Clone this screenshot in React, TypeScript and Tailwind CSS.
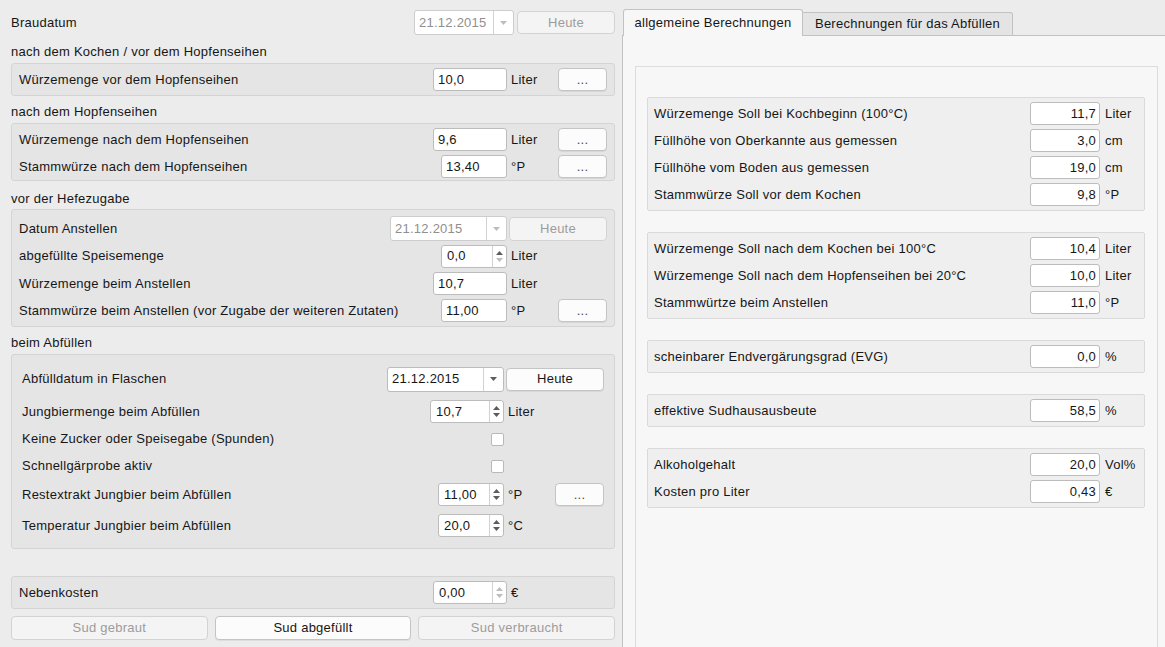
import React from 'react';

type Kids = { children?: React.ReactNode };

const Tri = ({ up, dim }: { up?: boolean; dim?: boolean }) => (
  <svg width="7" height="4" viewBox="0 0 7 4" className={dim ? 'text-[#bdbdbd]' : 'text-[#5c5c5c]'}>
    <polygon points={up ? '3.5,0 7,4 0,4' : '0,0 7,0 3.5,4'} fill="currentColor" />
  </svg>
);

const LineEdit = ({ value, w, right }: { value: string; w: string; right?: boolean }) => (
  <div
    className={`${w} h-[23px] shrink-0 bg-white border border-[#bcbcbc] rounded-[3px] flex items-center ${
      right ? 'justify-end pr-[3px]' : 'pl-[4px]'
    }`}
  >
    {value}
  </div>
);

const SpinBox = ({ value, w, downDim, upDim }: { value: string; w: string; downDim?: boolean; upDim?: boolean }) => (
  <div className={`${w} h-[23px] shrink-0 bg-white border border-[#bcbcbc] rounded-[3px] flex`}>
    <div className="flex-1 flex items-center pl-[5px]">{value}</div>
    <div className="w-[14px] border-l border-[#d2d2d2] flex flex-col items-center justify-center gap-[3px]">
      <Tri up dim={upDim} />
      <Tri dim={downDim} />
    </div>
  </div>
);

const Combo = ({ value, w, disabled }: { value: string; w: string; disabled?: boolean }) => (
  <div
    className={`${w} h-[25px] shrink-0 bg-white border rounded-[3px] flex ${
      disabled ? 'border-[#cdcdcd] text-[#8f8f8f]' : 'border-[#bcbcbc]'
    }`}
  >
    <div className="flex-1 flex items-center pl-[4px]">{value}</div>
    <div className="w-[20px] border-l border-[#d2d2d2] flex items-center justify-center">
      <Tri dim={disabled} />
    </div>
  </div>
);

const Btn = ({ label, w, disabled, extra = '' }: { label: string; w: string; disabled?: boolean; extra?: string }) => (
  <div
    className={`${w} ${extra} h-[23px] shrink-0 rounded-[4px] border flex items-center justify-center ${
      disabled
        ? 'bg-[#f4f4f4] border-[#d3d3d3] text-[#9c9c9c]'
        : 'bg-[#fcfcfc] border-[#c4c4c4] shadow-[0_1px_0_rgba(0,0,0,0.06)]'
    }`}
  >
    {label}
  </div>
);

const Check = () => <div className="w-[13px] h-[13px] bg-white border border-[#b9b9b9] rounded-[2px] shrink-0" />;

const Box = ({ children, extra = '' }: Kids & { extra?: string }) => (
  <div className={`border border-[#d4d4d4] bg-[#e5e5e5] rounded-[3px] ${extra}`}>{children}</div>
);

const Section = ({ children, extra }: Kids & { extra: string }) => (
  <div className={`h-[18px] flex items-center ${extra}`}>{children}</div>
);

const Row = ({ label, h = 'h-[27px]', extra = '', children }: Kids & { label: string; h?: string; extra?: string }) => (
  <div className={`${h} ${extra} flex items-center`}>
    <span className="flex-1 whitespace-nowrap">{label}</span>
    {children}
  </div>
);

const Unit = ({ u, w = 'w-[47px]' }: { u?: string; w?: string }) => (
  <span className={`${w} pl-[4px] shrink-0 whitespace-nowrap`}>{u}</span>
);

const Dots = ({ extra = 'ml-[4px]' }: { extra?: string }) => (
  <Btn label="..." w="w-[49px]" extra={`${extra} text-[#4a4a4a]`} />
);

const RBox = ({ children, extra = '' }: Kids & { extra?: string }) => (
  <div className={`border border-[#dadada] bg-[#efefef] rounded-[2px] pt-[2px] pb-[2px] ${extra}`}>{children}</div>
);

const RRow = ({ label, value, unit }: { label: string; value: string; unit: string }) => (
  <div className="h-[27px] flex items-center pl-[6px]">
    <span className="flex-1 whitespace-nowrap">{label}</span>
    <LineEdit value={value} w="w-[70px]" right />
    <span className="w-[44px] pl-[5px] shrink-0 whitespace-nowrap">{unit}</span>
  </div>
);

export default function App() {
  return (
    <div className="w-[1165px] h-[647px] overflow-hidden bg-[#ececec] flex font-['Liberation_Sans',Arial,sans-serif] text-[13px] tracking-[0.25px] text-[#161616]">
      {/* linke Seite */}
      <div className="w-[622px] shrink-0 pl-[11px] pr-[7px] flex flex-col">
        <div className="mt-[10px] h-[25px] flex items-center">
          <span className="flex-1">Braudatum</span>
          <Combo value="21.12.2015" w="w-[100px]" disabled />
          <Btn label="Heute" w="w-[98px]" extra="ml-[3px]" disabled />
        </div>

        <Section extra="mt-[8px] mb-[2px]">nach dem Kochen / vor dem Hopfenseihen</Section>
        <Box extra="pl-[7px] pr-[7px] py-[2px]">
          <Row label="Würzemenge vor dem Hopfenseihen">
            <LineEdit value="10,0" w="w-[74px]" />
            <Unit u="Liter" />
            <Dots />
          </Row>
        </Box>

        <Section extra="mt-[7px] mb-[2px]">nach dem Hopfenseihen</Section>
        <Box extra="pl-[7px] pr-[7px] pt-[2px]">
          <Row label="Würzemenge nach dem Hopfenseihen">
            <LineEdit value="9,6" w="w-[74px]" />
            <Unit u="Liter" />
            <Dots />
          </Row>
          <Row label="Stammwürze nach dem Hopfenseihen">
            <LineEdit value="13,40" w="w-[66px]" />
            <Unit u="°P" />
            <Dots />
          </Row>
        </Box>

        <Section extra="mt-[9px] mb-[1px]">vor der Hefezugabe</Section>
        <Box extra="pl-[7px] pr-[7px] pt-[5px] pb-[2px]">
          <Row label="Datum Anstellen">
            <Combo value="21.12.2015" w="w-[117px]" disabled />
            <Btn label="Heute" w="w-[98px]" extra="ml-[2px] h-[24px]" disabled />
          </Row>
          <Row label="abgefüllte Speisemenge" h="h-[28px]">
            <SpinBox value="0,0" w="w-[66px]" downDim />
            <Unit u="Liter" />
            <div className="w-[53px] shrink-0" />
          </Row>
          <Row label="Würzemenge beim Anstellen">
            <LineEdit value="10,7" w="w-[74px]" />
            <Unit u="Liter" />
            <div className="w-[53px] shrink-0" />
          </Row>
          <Row label="Stammwürze beim Anstellen (vor Zugabe der weiteren Zutaten)">
            <LineEdit value="11,00" w="w-[66px]" />
            <Unit u="°P" />
            <Dots />
          </Row>
        </Box>

        <Section extra="mt-[7px] mb-[2px]">beim Abfüllen</Section>
        <Box extra="pl-[10px] pr-[10px] pt-[11px] pb-[11px]">
          <Row label="Abfülldatum in Flaschen" h="h-[26px]">
            <Combo value="21.12.2015" w="w-[117px]" />
            <Btn label="Heute" w="w-[98px]" extra="ml-[2px]" />
          </Row>
          <Row label="Jungbiermenge beim Abfüllen" h="h-[23px]" extra="mt-[8px]">
            <SpinBox value="10,7" w="w-[74px]" />
            <Unit u="Liter" w="w-[51px]" />
            <div className="w-[49px] shrink-0" />
          </Row>
          <Row label="Keine Zucker oder Speisegabe (Spunden)" h="h-[14px]" extra="mt-[9px]">
            <Check />
            <div className="w-[100px] shrink-0" />
          </Row>
          <Row label="Schnellgärprobe aktiv" h="h-[14px]" extra="mt-[13px]">
            <Check />
            <div className="w-[100px] shrink-0" />
          </Row>
          <Row label="Restextrakt Jungbier beim Abfüllen" h="h-[23px]" extra="mt-[10px]">
            <SpinBox value="11,00" w="w-[66px]" />
            <Unit u="°P" w="w-[51px]" />
            <Dots extra="" />
          </Row>
          <Row label="Temperatur Jungbier beim Abfüllen" h="h-[23px]" extra="mt-[8px]">
            <SpinBox value="20,0" w="w-[66px]" />
            <Unit u="°C" w="w-[51px]" />
            <div className="w-[49px] shrink-0" />
          </Row>
        </Box>

        <Box extra="mt-[27px] pl-[7px] pr-[7px] py-[2px]">
          <Row label="Nebenkosten">
            <SpinBox value="0,00" w="w-[74px]" downDim upDim />
            <Unit u="€" />
            <div className="w-[53px] shrink-0" />
          </Row>
        </Box>

        <div className="mt-[7px] grid grid-cols-3 gap-[7px]">
          <Btn label="Sud gebraut" w="w-full" extra="h-[24px]" disabled />
          <Btn label="Sud abgefüllt" w="w-full" extra="h-[24px]" />
          <Btn label="Sud verbraucht" w="w-full" extra="h-[24px]" disabled />
        </div>
      </div>

      {/* rechte Seite: Tabs */}
      <div className="flex-1 min-w-0 flex flex-col">
        <div className="relative z-10 h-[36px] -mb-[1px] pl-[1px] flex items-end">
          <div className="w-[180px] h-[27px] bg-[#f7f7f7] border border-b-0 border-[#c2c2c2] rounded-t-[3px] flex items-center justify-center whitespace-nowrap">
            allgemeine Berechnungen
          </div>
          <div className="w-[210px] h-[24px] bg-[#e4e4e4] border border-l-0 border-[#c2c2c2] rounded-tr-[3px] flex items-center justify-center whitespace-nowrap">
            Berechnungen für das Abfüllen
          </div>
        </div>
        <div className="flex-1 bg-[#f7f7f7] border-l border-t border-[#c2c2c2] pl-[12px] pr-[7px] pt-[30px] flex flex-col">
          <div className="flex-1 border border-b-0 border-[#dcdcdc] bg-[#f7f7f7] pl-[11px] pr-[12px] pt-[30px] flex flex-col">
            <RBox>
              <RRow label="Würzemenge Soll bei Kochbeginn (100°C)" value="11,7" unit="Liter" />
              <RRow label="Füllhöhe von Oberkannte aus gemessen" value="3,0" unit="cm" />
              <RRow label="Füllhöhe vom Boden aus gemessen" value="19,0" unit="cm" />
              <RRow label="Stammwürze Soll vor dem Kochen" value="9,8" unit="°P" />
            </RBox>
            <RBox extra="mt-[21px]">
              <RRow label="Würzemenge Soll nach dem Kochen bei 100°C" value="10,4" unit="Liter" />
              <RRow label="Würzemenge Soll nach dem Hopfenseihen bei 20°C" value="10,0" unit="Liter" />
              <RRow label="Stammwürtze beim Anstellen" value="11,0" unit="°P" />
            </RBox>
            <RBox extra="mt-[21px]">
              <RRow label="scheinbarer Endvergärungsgrad (EVG)" value="0,0" unit="%" />
            </RBox>
            <RBox extra="mt-[21px]">
              <RRow label="effektive Sudhausausbeute" value="58,5" unit="%" />
            </RBox>
            <RBox extra="mt-[21px]">
              <RRow label="Alkoholgehalt" value="20,0" unit="Vol%" />
              <RRow label="Kosten pro Liter" value="0,43" unit="€" />
            </RBox>
          </div>
        </div>
      </div>
    </div>
  );
}
